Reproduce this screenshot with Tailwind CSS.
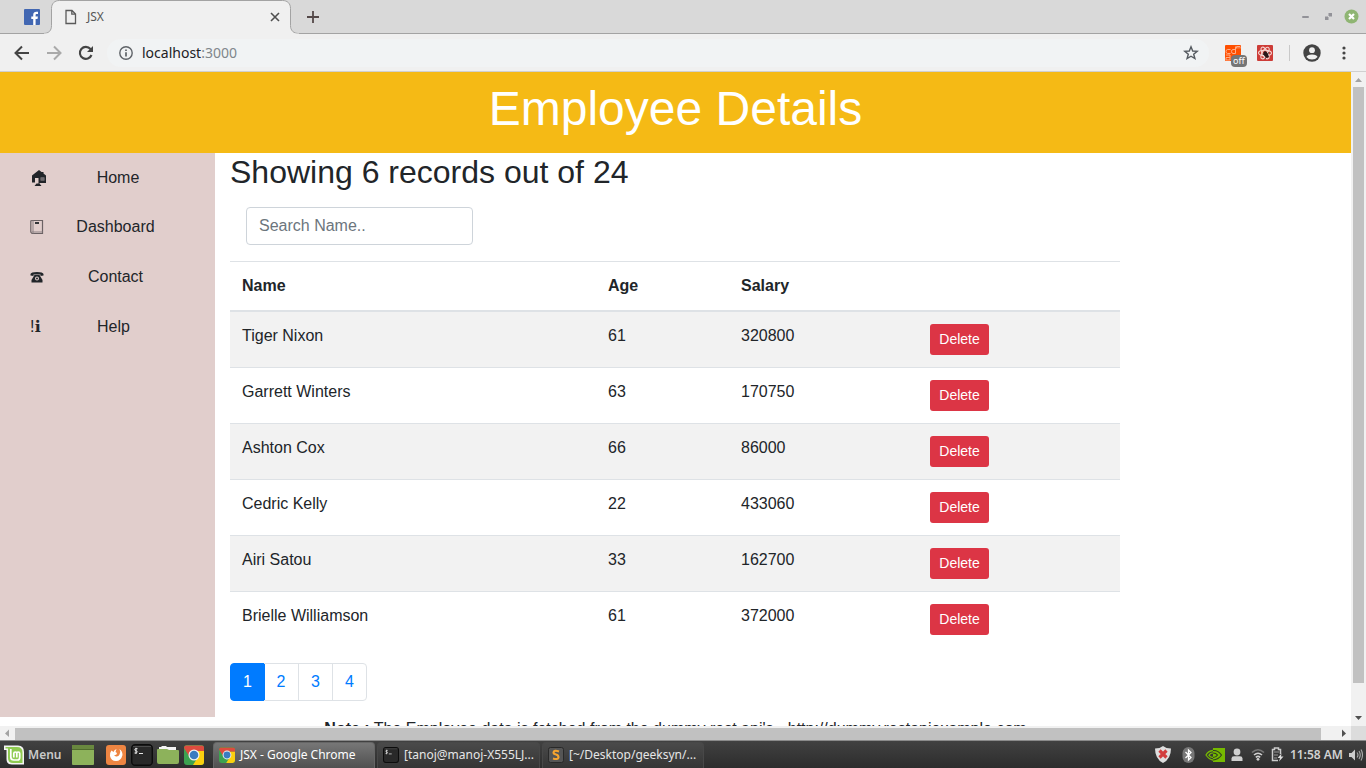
<!DOCTYPE html>
<html lang="en">
<head>
<meta charset="utf-8">
<title>JSX</title>
<script src="https://cdn.jsdelivr.net/npm/@tailwindcss/browser@4"></script>
</head>
<body class="flex h-screen flex-col overflow-hidden bg-white font-['Liberation_Sans',Arial,sans-serif] text-base text-[#212529]">

<svg class="hidden">
  <symbol id="chrome" viewBox="0 0 20 20">
    <rect width="20" height="20" rx="3" fill="#3da250"/>
    <path d="M2 0.500H18a2 2 0 0 1 2 2V6H10L5 11 0 3a2.500 2.500 0 0 1 2-2.500z" fill="#dd4b3e"/>
    <path d="M10 6H20V17a3 3 0 0 1-3 3H9l5-8z" fill="#fbd00f"/>
    <circle cx="10" cy="10" r="5.500" fill="#f3f3f3"/><circle cx="10" cy="10" r="4.300" fill="#3b7cc0"/>
  </symbol>
  <symbol id="terminal" viewBox="0 0 22 22">
    <rect x=".7" y=".7" width="20.600" height="20.600" rx="3.500" fill="#292929" stroke="#0c0c0c" stroke-width="1.400"/>
    <path d="M2 2.500H20" stroke="#555" stroke-width=".8"/>
    <path d="M6.500 4.700H5q-1.200 0-1.200 1T5 6.800t1.200 1T5 9H3.500M5 3.800V10M8 9.500H12" fill="none" stroke="#e6e6e6" stroke-width="1"/>
  </symbol>
</svg>

<!-- Browser tab strip -->
<header class="shrink-0 font-['Noto_Sans',sans-serif]">
  <div class="relative flex h-[34px] items-center border-b border-[#a3a3a3] bg-[#d9d9d9]">
    <svg class="absolute left-[43px] top-0" width="257" height="34" viewBox="0 0 257 34"><path d="M0 33.500c6 0 8.500-3 8.500-8V8.500c0-5 3-8 8-8H239.500c5 0 8 3 8 8v17c0 5 3 8 8.500 8V35H0z" fill="#f0f0f0" stroke="#a3a3a3"/><path d="M1 34H256" stroke="#f0f0f0" stroke-width="1"/></svg>
    <div class="relative flex flex-1 items-center">
      <svg class="ml-6" width="16" height="16" viewBox="0 0 16 16"><rect width="16" height="16" rx="1" fill="#4267b2"/><path d="M9.200 16V10H7.300V7.500h1.900V6c0-2 1.300-3.200 3.100-3.200h1.700V5h-1.200c-1 0-1.200.5-1.200 1.200v1.300h2.300L13.500 10h-1.900v6z" fill="#fff"/></svg>
      <svg class="ml-[25px]" width="12" height="16" viewBox="0 0 12 16" fill="none" stroke="#5a5a5a" stroke-width="1.300"><path d="M1 1.500H7L10.500 5V14.500H1zM6.800 1.500V5.200H10.500"/></svg>
      <span class="ml-[10px] w-[183px] text-xs text-[#555]">JSX</span>
      <button aria-label="Close tab"><svg width="10" height="10" viewBox="0 0 10 10" stroke="#4f4f4f" stroke-width="1.600"><path d="M1 1 9 9M9 1 1 9"/></svg></button>
      <button class="ml-[27px]" aria-label="New tab"><svg width="12" height="12" viewBox="0 0 12 12" stroke="#544848" stroke-width="1.800"><path d="M6 0V12M0 6H12"/></svg></button>
      <div class="ml-auto mr-[7px] flex items-center">
        <button aria-label="Minimise"><svg width="7" height="4" viewBox="0 0 7 4"><rect y="1" width="7" height="2" rx="1" fill="#929298"/></svg></button>
        <button class="ml-4" aria-label="Restore"><svg width="7" height="7" viewBox="0 0 7 7" fill="#929298"><path d="M3 0H7V4L6 3 5 4 3 2 4 1zM0 3 1 4 2 3 4 5 3 6 4 7H0z"/></svg></button>
        <button class="ml-3" aria-label="Close window"><svg width="15" height="15" viewBox="0 0 15 15"><circle cx="7.500" cy="7.500" r="7" fill="#8fb573"/><path d="M5 5 10 10M10 5 5 10" stroke="#fff" stroke-width="2.200"/></svg></button>
      </div>
    </div>
  </div>
  <!-- Toolbar -->
  <div class="flex h-[38px] items-center border-b border-[#d0d0d0] bg-[#f0f0f0]">
    <button class="ml-[14px]" aria-label="Back"><svg width="16" height="16" viewBox="0 0 16 16" fill="none" stroke="#444" stroke-width="2"><path d="M15 8H2M8 1.500 1.500 8 8 14.500"/></svg></button>
    <button class="ml-4" aria-label="Forward"><svg width="16" height="16" viewBox="0 0 16 16" fill="none" stroke="#a9a9a9" stroke-width="2"><path d="M1 8H14M8 1.500 14.500 8 8 14.500"/></svg></button>
    <button class="ml-4" aria-label="Reload"><svg width="16" height="16" viewBox="0 0 16 16" fill="none" stroke="#444" stroke-width="2.100"><path d="M13.500 10A6 6 0 1 1 12.500 4L14 5.500"/><path d="M15 1V7H9z" fill="#444" stroke="none"/></svg></button>
    <div class="ml-[13px] flex h-7 flex-1 items-center rounded-full bg-[#f1f3f4] pl-3 pr-[10px]">
      <svg width="14" height="14" viewBox="0 0 14 14" fill="none" stroke="#5f6368" stroke-width="1.400"><circle cx="7" cy="7" r="6.200"/><path d="M7 6.200V10.500M7 3.500V5" stroke-width="1.700"/></svg>
      <span class="ml-[9px] flex-1 text-sm text-[#80868b]"><span class="text-[#202124]">localhost</span>:3000</span>
      <button aria-label="Bookmark this page"><svg width="16" height="16" viewBox="0 0 16 16" fill="none" stroke="#555a60" stroke-width="1.400"><path d="M8 1.800 9.700 6 14.200 6.300 10.700 9.200 11.900 13.600 8 11.200 4.100 13.600 5.300 9.200 1.800 6.300 6.300 6z"/></svg></button>
    </div>
    <button class="relative ml-4" aria-label="Extension, off"><svg width="16" height="16" viewBox="0 0 16 16"><rect width="16" height="16" rx="1" fill="#ff4f00"/><path d="M5.500 4.500H2.500Q1 4.500 1 6.500T2.500 8.500H5.500M10.500 1.500V8.500H8Q6.500 8.500 6.500 6.500T8 4.500H10.500M11.500 3.500V1.500H13V3.500M13 1.500H15V3.500M1 10H5V15H1V12.500H5" fill="none" stroke="#ffac86"/></svg><span class="absolute left-[6px] top-[10px] h-3 rounded-sm bg-[#757575] px-[2px] text-[9px] leading-3 text-white">off</span></button>
    <button class="ml-4" aria-label="Extension"><svg width="16" height="16" viewBox="0 0 16 16"><rect width="16" height="16" rx="1" fill="#cd3c37"/><g fill="none" stroke="#f6d7d3" stroke-width="1.100"><ellipse cx="8" cy="8" rx="6.500" ry="2.700"/><ellipse cx="8" cy="8" rx="6.500" ry="2.700" transform="rotate(60 8 8)"/><ellipse cx="8" cy="8" rx="6.500" ry="2.700" transform="rotate(120 8 8)"/></g><ellipse cx="9" cy="9.500" rx="2" ry="3.500" fill="#27191a" transform="rotate(-30 9 9.500)"/><path d="M5.500 9 12 12M12 7 8 14" stroke="#27191a" stroke-width=".8"/></svg></button>
    <span class="ml-4 h-4 w-px bg-[#c9c9c9]"></span>
    <button class="ml-[13px]" aria-label="Profile"><svg width="18" height="18" viewBox="0 0 18 18"><circle cx="9" cy="9" r="8.700" fill="#444"/><circle cx="9" cy="6.200" r="2.900" fill="#f0f0f0"/><path d="M3.500 13Q4 10.500 9 10.500T14.500 13Q12.500 15.500 9 15.500T3.500 13" fill="#f0f0f0"/></svg></button>
    <button class="ml-[21px] mr-5" aria-label="Menu"><svg width="4" height="14" viewBox="0 0 4 14" fill="#444"><circle cx="2" cy="2" r="1.600"/><circle cx="2" cy="7" r="1.600"/><circle cx="2" cy="12" r="1.600"/></svg></button>
  </div>
</header>

<!-- Page viewport -->
<div class="flex min-h-0 flex-1">
  <div class="min-w-0 flex-1 overflow-hidden bg-white">
    <h1 class="bg-[#f5ba15] pb-4 pt-2 text-center text-5xl leading-[57px] text-white">Employee Details</h1>
    <div class="flex">
      <nav class="w-[215px] shrink-0 bg-[#e1cecc]">
        <a href="#home" class="flex h-[49px] items-center pl-[30px]"><svg width="17" height="18" viewBox="0 0 17 18" fill="#212529"><path d="M9 1 2 6.500V13.500H5V9H8.500V14.500H6.500L4.500 17H11.500L9.500 14.500V14H16V6.500L13.500 4.500V3H11.500z"/><path d="M5 9H8V13.500H5z" fill="#e1cecc"/><path d="M10.500 8.500H14.500V11.500H10.500z" fill="#a39b9d"/><path d="M10.500 10H14.500" stroke="#212529" stroke-width=".8"/></svg><span class="w-[142px] text-center">Home</span></a>
        <a href="#dashboard" class="flex h-[50px] items-center pl-[30px]"><svg width="14" height="16" viewBox="0 0 14 16" fill="none" stroke="#6b6264"><path d="M2 1.500H12.500V14.500H2L.8 13V2z" stroke-width="1.200"/><path d="M3 1.500V14.500M1.500 13H12.500" stroke="#8d8385"/><path d="M5 4H9" stroke="#212529" stroke-width="1.800"/></svg><span class="w-[143px] text-center">Dashboard</span></a>
        <a href="#contact" class="flex h-[50px] items-center pl-[30px]"><svg width="14" height="12" viewBox="0 0 14 12" fill="#212529"><path d="M.5 4.500V3Q1 1 7 1T13.500 3V4.500L10.500 5V3.500H3.500V5z"/><path d="M4.500 4H9.500L12.500 9V11.500H1.500V9z"/><circle cx="7" cy="7.500" r="2" fill="#e1cecc"/><circle cx="7" cy="7.500" r="1"/></svg><span class="w-[143px] text-center">Contact</span></a>
        <a href="#help" class="flex h-[50px] items-center pl-[30px]"><span class="w-3 whitespace-nowrap">!<span class="font-['DejaVu_Sans',sans-serif]">ℹ</span></span><span class="w-[143px] text-center">Help</span></a>
      </nav>
      <main class="min-w-0 flex-1 px-[15px]">
        <h2 class="text-[32px] leading-[38px]">Showing 6 records out of 24</h2>
        <div class="px-4 py-4">
          <input type="text" aria-label="Search Name" placeholder="Search Name.." class="block h-[38px] w-[227px] rounded border border-[#ced4da] px-3 placeholder:text-[#6c757d]">
        </div>
        <table class="w-[890px] table-fixed border-collapse text-left">
          <colgroup><col class="w-[366px]"><col class="w-[133px]"><col class="w-[189px]"><col class="w-[202px]"></colgroup>
          <thead><tr>
            <th class="border-b-2 border-t border-[#dee2e6] p-3">Name</th><th class="border-b-2 border-t border-[#dee2e6] p-3">Age</th><th class="border-b-2 border-t border-[#dee2e6] p-3">Salary</th><th class="border-b-2 border-t border-[#dee2e6] p-3" aria-label="Actions"></th>
          </tr></thead>
          <tbody class="[&_td]:border-t [&_td]:border-[#dee2e6] [&_td]:p-3 [&_td]:align-top [&_tr:nth-child(odd)]:bg-[#f2f2f2] [&_button]:block [&_button]:h-[31px] [&_button]:w-[59px] [&_button]:rounded-[3px] [&_button]:bg-[#dc3545] [&_button]:pb-[2px] [&_button]:text-sm [&_button]:text-white">
            <tr><td>Tiger Nixon</td><td>61</td><td>320800</td><td><button>Delete</button></td></tr>
            <tr><td>Garrett Winters</td><td>63</td><td>170750</td><td><button>Delete</button></td></tr>
            <tr><td>Ashton Cox</td><td>66</td><td>86000</td><td><button>Delete</button></td></tr>
            <tr><td>Cedric Kelly</td><td>22</td><td>433060</td><td><button>Delete</button></td></tr>
            <tr><td>Airi Satou</td><td>33</td><td>162700</td><td><button>Delete</button></td></tr>
            <tr><td>Brielle Williamson</td><td>61</td><td>372000</td><td><button>Delete</button></td></tr>
          </tbody>
        </table>
        <div class="my-4 flex h-[38px] text-[#007bff]">
          <button class="w-[35px] rounded-l border border-[#007bff] bg-[#007bff] text-white">1</button>
          <button class="-ml-px w-[35px] border border-l-0 border-[#dee2e6]">2</button>
          <button class="-ml-px w-[35px] border border-[#dee2e6]">3</button>
          <button class="-ml-px w-[35px] rounded-r border border-[#dee2e6]">4</button>
        </div>
      </main>
    </div>
    <p class="text-center leading-6"><b>Note :</b> The Employee data is fetched from the dummy rest api's - http://dummy.restapiexample.com</p>
  </div>
  <div class="flex w-[15px] shrink-0 flex-col items-center bg-[#f1f1f1]">
    <svg width="15" height="15" viewBox="0 0 15 15"><path d="M4 10 7.500 6 11 10z" fill="#a3a3a3"/></svg>
    <div class="mb-[28px] w-[11px] flex-1 bg-[#c1c1c1]"></div>
    <svg width="15" height="15" viewBox="0 0 15 15"><path d="M4 5H11L7.500 9z" fill="#505050"/></svg>
  </div>
</div>
<div class="flex h-[14px] shrink-0 items-center bg-[#f1f1f1]">
  <svg width="15" height="14" viewBox="0 0 15 14"><path d="M9 3.500V11L5 7.500z" fill="#a3a3a3"/></svg>
  <div class="mt-[2px] h-3 flex-1 bg-[#c1c1c1]"></div>
  <svg class="ml-[15px]" width="15" height="14" viewBox="0 0 15 14"><path d="M6 3.500V11L10 7.500z" fill="#505050"/></svg>
  <div class="h-full w-[15px] bg-[#dcdcdc]"></div>
</div>

<!-- Desktop panel -->
<footer class="flex h-7 shrink-0 items-center border-t border-[#8a8a8a] bg-linear-to-b from-[#414141] to-[#2d2d2d] font-['Noto_Sans',sans-serif] text-xs text-[#e6e6e6]">
  <button class="ml-1 flex w-[58px] items-center font-semibold text-[#c9c9c9]"><svg class="mr-1" width="20" height="20" viewBox="0 0 20 20"><path d="M0 .5H14Q20 .5 20 7V19.500H8Q2.500 19.500 2.500 14V5H0z" fill="#f4f4f4"/><path d="M1.500 2H13Q18.500 2 18.500 7.500V18H9Q4 18 4 13V3.500H1.500z" fill="#8fcb52"/><path d="M6.800 4V12Q6.800 15 9.800 15H13.500Q15.700 15 15.700 12.500V8.500Q15.700 7 14.200 7T12.800 8.500V12.500M12.800 8.500Q12.800 7 11.300 7T9.800 8.500V12.500" fill="none" stroke="#fff" stroke-width="1.700"/></svg>Menu</button>
  <button class="ml-[10px]" aria-label="Show desktop"><svg width="22" height="20" viewBox="0 0 22 20"><rect width="22" height="20" rx="1" fill="#8db25b"/><rect width="22" height="4" fill="#69883f"/><path d="M0 4.500H22" stroke="#506c2d"/></svg></button>
  <button class="ml-3" aria-label="Firefox"><svg width="20" height="20" viewBox="0 0 20 20"><rect width="20" height="20" rx="3" fill="#ee8542"/><path d="M10.500 4Q8 5 7.500 7L5.500 5.500Q3.500 8 4 11 5 16 10 16T16.500 10Q16.500 6 13.500 4 15 7 13.500 9.500 12.500 12 10 11.500L8 10.500 10.500 9.500 11 8 9.500 7Z" fill="#fff"/></svg></button>
  <button class="ml-[5px]" aria-label="Terminal"><svg width="22" height="22"><use href="#terminal"/></svg></button>
  <button class="ml-1" aria-label="Files"><svg width="22" height="20" viewBox="0 0 22 20"><path d="M2 5V2H4L5 1H9L10 2H19V5" fill="#f4f4f4"/><path d="M1 4H10L12 5H21Q22 5 22 6V17Q22 19 20 19H2Q0 19 0 17V5Q0 4 1 4z" fill="#8db25b"/></svg></button>
  <button class="ml-[5px]" aria-label="Chrome"><svg width="20" height="20"><use href="#chrome"/></svg></button>
  <div class="ml-[9px] flex gap-[2px]">
    <button class="flex h-[26px] w-[162px] items-center gap-[5px] rounded-t border border-b-0 border-[#666] bg-linear-to-b from-[#777] to-[#505050] px-[5px] text-white"><svg width="16" height="16"><use href="#chrome"/></svg>JSX - Google Chrome</button>
    <button class="flex h-[26px] w-[163px] items-center gap-[5px] rounded-t border border-b-0 border-[#484848] bg-linear-to-b from-[#4a4a4a] to-[#353535] px-[5px]"><svg class="shrink-0" width="16" height="16"><use href="#terminal"/></svg><span class="whitespace-nowrap">[tanoj@manoj-X555LJ...</span></button>
    <button class="flex h-[26px] w-[162px] items-center gap-[5px] rounded-t border border-b-0 border-[#484848] bg-linear-to-b from-[#4a4a4a] to-[#353535] px-[5px]"><svg class="shrink-0" width="16" height="16" viewBox="0 0 16 16"><rect x=".5" y=".5" width="15" height="15" rx="2" fill="#555" stroke="#292929"/><path d="M11 4.500Q6 2.700 5.500 5.500 5.500 7 8 7.500T10.500 10.500Q10 13 5 11.500" fill="none" stroke="#f5a32f" stroke-width="2.100"/></svg><span class="whitespace-nowrap">[~/Desktop/geeksyn/...</span></button>
  </div>
  <div class="ml-auto mr-[3px] flex items-center">
    <svg width="16" height="17" viewBox="0 0 16 17"><path d="M8 0Q11 2.500 16 2.500 16 13 8 17 0 13 0 2.500 5 2.500 8 0" fill="#dedede"/><path d="M4.500 4.500 11.500 11.500M11.500 4.500 4.500 11.500" stroke="#d23d3d" stroke-width="3.200"/></svg>
    <svg class="ml-[11px]" width="13" height="16" viewBox="0 0 13 16"><rect x=".5" width="12" height="16" rx="6" fill="#777"/><path d="M3.500 5 9 10.500 6.500 13V3L9 5.500 3.500 11" fill="none" stroke="#fff" stroke-width="1.300"/></svg>
    <svg class="ml-[10px]" width="20" height="14" viewBox="0 0 20 14"><path d="M8 0H20V14H8z" fill="#76b900"/><path d="M8 2.500Q3 3 1 7 4 11.500 8 12 13 11.500 15.500 8.500M8 2.500Q13 2 17 7M8 4.800Q5 5 4 7.300 5.500 9.500 8 9.500 11 9 12 7 10 4.500 8 4.800" fill="none" stroke="#76b900" stroke-width="1.300"/><path d="M8 2.500Q13 2 16.500 7 13.500 11.500 8 12M8 5Q11 5 12.500 7 11 9.500 8 9.500" fill="none" stroke="#303b20" stroke-width="1.100"/></svg>
    <svg class="ml-[6px]" width="12" height="14" viewBox="0 0 12 14" fill="#cfcfcf"><circle cx="6" cy="4" r="3.400"/><path d="M.5 13V10.500Q.5 8.300 3 8.300H9Q11.500 8.300 11.500 10.500V13z"/></svg>
    <svg class="ml-2" width="14" height="13" viewBox="0 0 14 13" fill="none" stroke-width="1.600"><path d="M1 4.500Q7-1 13 4.500" stroke="#777"/><path d="M3 7Q7 3.500 11 7M4.800 9.300Q7 7.500 9.200 9.300" stroke="#d0d0d0"/><circle cx="7" cy="11.300" r="1.400" fill="#d0d0d0"/></svg>
    <svg class="ml-[6px]" width="13" height="15" viewBox="0 0 13 15"><path d="M7 13.500H1.500V2.500H3.500V1H7.500V2.500H9.500V7" fill="none" stroke="#ccc" stroke-width="1.500"/><path d="M3 5H8M3 8H7M3 11H6" stroke="#999"/><path d="M10.500 6.500 6.500 11H9L8 14.500 12.500 9.500H10z" fill="#ddd"/></svg>
    <span class="ml-[6px] font-semibold text-[#d2d2d2]">11:58 AM</span>
    <svg class="ml-[6px]" width="14" height="14" viewBox="0 0 14 14"><path d="M0 5H2.500L6 1.500V12.500L2.500 9H0z" fill="#ccc"/><path d="M8 4.500Q10 7 8 9.500M10 3Q12.500 7 10 11M12 1.500Q15 7 12 12.500" fill="none" stroke="#aaa" stroke-width="1.100"/></svg>
  </div>
</footer>
</body>
</html>
